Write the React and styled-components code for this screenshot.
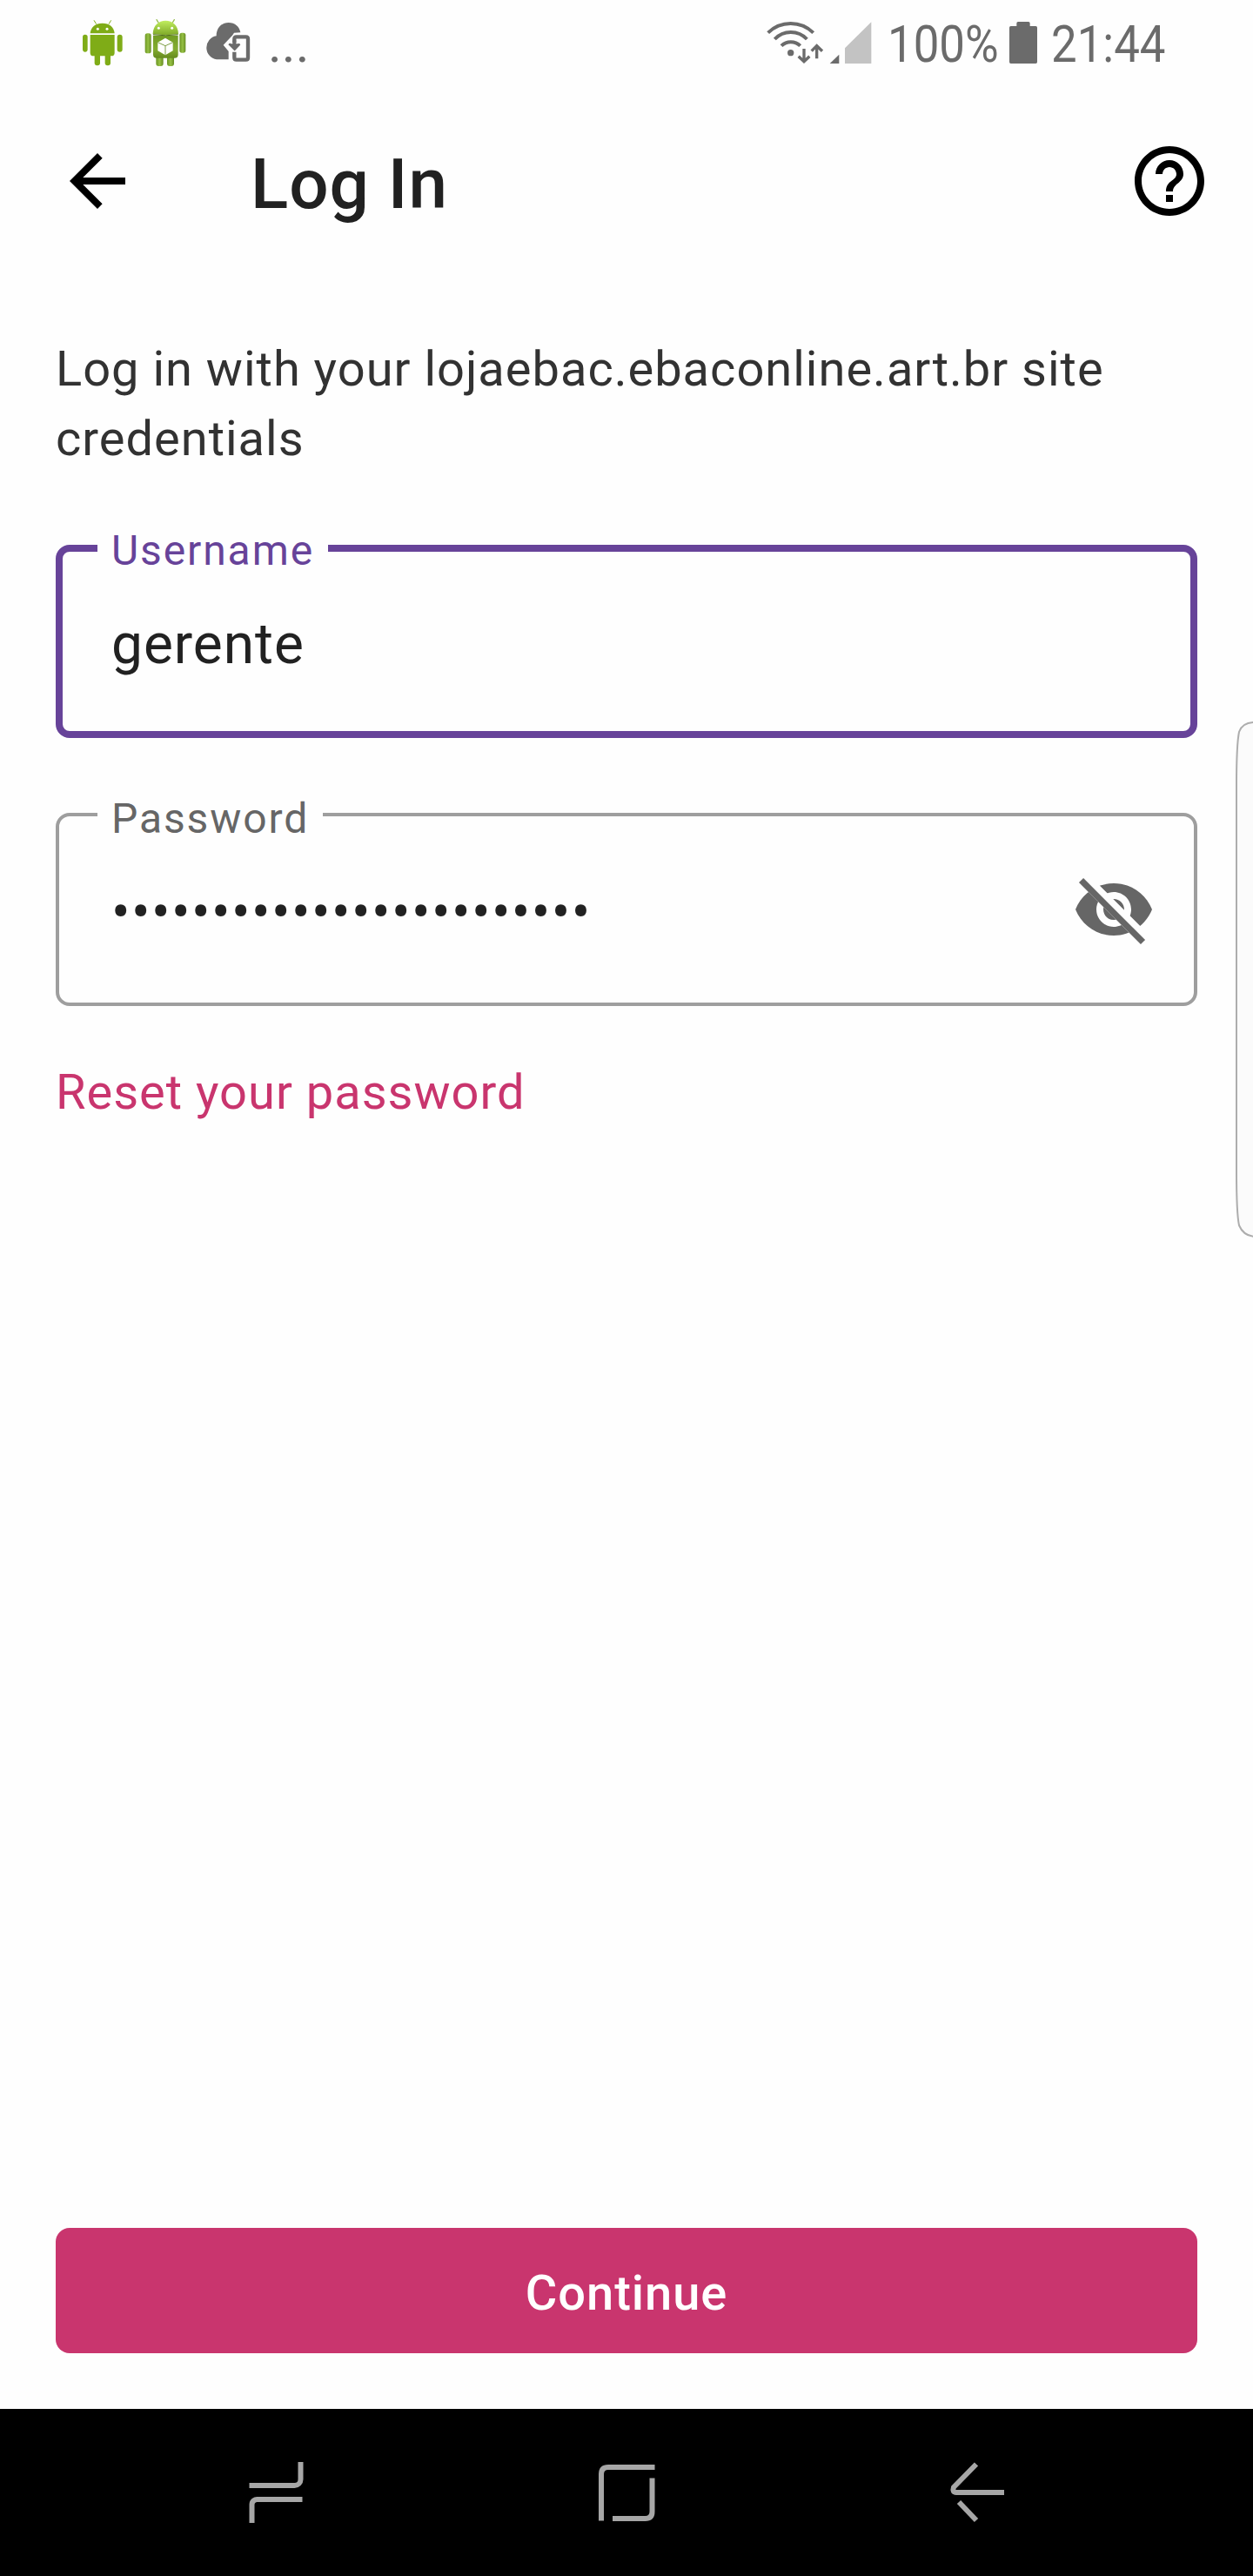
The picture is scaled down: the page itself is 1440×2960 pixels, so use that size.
import React from 'react';
import styled, { createGlobalStyle } from 'styled-components';
import { MdArrowBack, MdHelpOutline } from 'react-icons/md';

const GlobalStyle = createGlobalStyle`
  * { box-sizing: border-box; }
  body { margin: 0; background: #fefefe; }
`;

const Screen = styled.div`
  position: relative;
  width: 1440px;
  height: 2960px;
  display: flex;
  flex-direction: column;
  overflow: hidden;
  background: #fefefe;
  color: #212121;
  font-family: Roboto, 'Liberation Sans', sans-serif;
`;

const StatusBar = styled.header`
  display: flex;
  justify-content: space-between;
  height: 96px;
  padding: 0 99px 0 95px;
  color: #6b6b6b;
`;

const StatusGroup = styled.div`
  display: flex;
  align-items: flex-start;
`;

const StatusGlyph = styled.svg`
  display: block;
  flex: none;
  height: 100px;
  width: ${(p) => p.$w}px;
`;

const StatusText = styled.span`
  flex: none;
  width: ${(p) => p.$w}px;
  margin-left: ${(p) => p.$gap || 0}px;
  font-size: 60px;
  line-height: 102px;
  white-space: nowrap;
  transform: scaleX(${(p) => p.$squeeze || 1});
  transform-origin: left center;
`;

const AppBar = styled.div`
  display: flex;
  align-items: center;
  height: 224px;
  padding: 0 48px 0 64px;
  svg { display: block; width: 96px; height: 96px; color: #000; }
`;

const Title = styled.h1`
  flex: 1;
  margin: 7px 0 0 128px;
  font-size: 80px;
  font-weight: 500;
  line-height: 96px;
  letter-spacing: 1px;
`;

const Content = styled.main`
  flex: 1;
  display: flex;
  flex-direction: column;
  align-items: stretch;
  padding: 64px;
`;

const Intro = styled.p`
  margin: 0 0 58px;
  font-size: 56px;
  line-height: 80px;
  letter-spacing: 1px;
  color: #323232;
`;

const Field = styled.fieldset`
  min-width: 0;
  height: ${(p) => (p.$focused ? 246 : 248)}px;
  margin: 0 0 60px;
  padding: 0 ${(p) => (p.$focused ? 40 : 44)}px;
  border: ${(p) => (p.$focused ? '8px solid #674399' : '4px solid #9e9e9e')};
  border-radius: 16px;
`;

const Label = styled.legend`
  height: 56px;
  padding: ${(p) => (p.$focused ? 4 : 6)}px 16px 0;
  font-size: 48px;
  line-height: 53px;
  letter-spacing: 1.9px;
  color: ${(p) => (p.$focused ? '#674399' : '#666666')};
`;

const FieldRow = styled.div`
  display: flex;
  align-items: center;
  justify-content: space-between;
  height: ${(p) => p.$h}px;
  padding: 0 0 0 16px;
  svg { display: block; width: 96px; height: 96px; }
`;

const Value = styled.span`
  padding-top: ${(p) => (p.$masked ? 8 : 0)}px;
  font-size: 64px;
  line-height: 76px;
  letter-spacing: ${(p) => (p.$masked ? 1.4 : 0.95)}px;
`;

const ResetLink = styled.a`
  margin-top: -1px;
  font-size: 56px;
  line-height: 80px;
  letter-spacing: 1px;
  color: #c9356e;
`;

const Continue = styled.button`
  height: 144px;
  margin-top: auto;
  padding: 5px 0 0;
  border: 0;
  border-radius: 16px;
  background: #c9356e;
  color: #fff;
  font: 500 56px/64px Roboto, 'Liberation Sans', sans-serif;
  letter-spacing: 1px;
`;

const NavBar = styled.nav`
  display: flex;
  align-items: center;
  justify-content: center;
  gap: 303px;
  height: 192px;
  background: #000;
  svg { display: block; width: 100px; height: 100px; }
`;

const EdgeHandle = styled.svg`
  position: absolute;
  right: 0;
  top: 826px;
  width: 24px;
  height: 598px;
`;

const AndroidFlat = () => (
  <StatusGlyph $w={46} viewBox="46 0 138 300" fill="#7fac17">
    <path d="M72 115c2-22 18-35 42-35s40 13 42 35z" />
    <path d="M85 70l8 13M144 70l-8 13" stroke="#7fac17" strokeWidth="3" />
    <path d="M72 120h84v62a11 11 0 0 1-11 11H83a11 11 0 0 1-11-11z" />
    <rect x="46" y="119" width="17" height="60" rx="8.5" />
    <rect x="165" y="119" width="18" height="60" rx="9" />
    <rect x="87" y="176" width="19" height="50" rx="9" />
    <rect x="123" y="176" width="19" height="50" rx="9" />
    <circle cx="98" cy="100" r="4.5" fill="#fff" />
    <circle cx="130" cy="100" r="4.5" fill="#fff" />
  </StatusGlyph>
);

const AndroidBox = () => (
  <StatusGlyph $w={73} viewBox="184 0 219 300">
    <defs>
      <linearGradient id="head" x1="0" y1="0" x2="0" y2="1">
        <stop offset="0" stopColor="#c1ee5f" />
        <stop offset="1" stopColor="#7fa928" />
      </linearGradient>
      <linearGradient id="torso" x1="0" y1="0" x2="0" y2="1">
        <stop offset="0" stopColor="#719b22" />
        <stop offset="0.6" stopColor="#84ad31" />
        <stop offset="1" stopColor="#668b20" />
      </linearGradient>
      <linearGradient id="limb" x1="0" y1="0" x2="1" y2="0">
        <stop offset="0" stopColor="#6b9423" />
        <stop offset="0.5" stopColor="#96c144" />
        <stop offset="1" stopColor="#668b22" />
      </linearGradient>
    </defs>
    <path d="M301 68l8 13M362 68l-8 13" stroke="#98bd50" strokeWidth="4" strokeLinecap="round" />
    <rect x="299" y="184" width="25" height="44" rx="9" fill="url(#limb)" />
    <rect x="337" y="184" width="24" height="44" rx="9" fill="url(#limb)" />
    <rect x="261" y="115" width="21" height="69" rx="8" fill="url(#limb)" />
    <rect x="380" y="113" width="21" height="69" rx="8" fill="url(#limb)" />
    <path d="M289 122h86v66q0 12-12 12h-62q-12 0-12-12z" fill="url(#torso)" />
    <path d="M288 117c1-30 20-46 44-46s43 16 44 46q-44 7-88 0z" fill="url(#head)" />
    <path d="M289 119q43 7 86 0" fill="none" stroke="#4f6e17" strokeWidth="3" />
    <circle cx="308" cy="97" r="4.5" fill="#fff" />
    <circle cx="354" cy="97" r="4.5" fill="#fff" />
    <path d="M331 131l26 15v29l-26 15-26-15v-29z" fill="#fff" />
    <path d="M305 146l26 12 26-12M331 158v32" fill="none" stroke="#7f9f48" strokeWidth="3" />
  </StatusGlyph>
);

const CloudDevice = () => (
  <StatusGlyph $w={75} viewBox="403 0 225 300">
    <path d="M508 205a41 41 0 0 1-1-81c0-28 18-46 42-46 22 0 38 14 41 34l-22 1-6 9-31 33 18 22v28z" fill="#6b6b6b" />
    <path d="M569 147v-13q0-7 7-7h33q7 0 7 7v65q0 7-7 7h-33q-7 0-7-7v-20" fill="none" stroke="#6b6b6b" strokeWidth="13" />
    <path d="M549 151h14v-12h12v12h14l-20 22z" fill="#6b6b6b" />
    <path d="M551 151l19 19 17-18" fill="none" stroke="#6b6b6b" strokeWidth="8" />
  </StatusGlyph>
);

const Connectivity = () => (
  <StatusGlyph $w={122} viewBox="60 0 366 300" fill="none" stroke="#6b6b6b">
    <path d="M68 113A111 111 0 0 1 224 113" strokeWidth="12" />
    <path d="M91 135A76 76 0 0 1 202 135" strokeWidth="12" />
    <path d="M114 158A46 46 0 0 1 179 158" strokeWidth="12" />
    <circle cx="146" cy="182" r="11" fill="#6b6b6b" stroke="none" />
    <path d="M192 168v42M173 194l19 18 19-18" strokeWidth="10" />
    <path d="M236 202v-42M218 176l18-18 19 18" strokeWidth="10" />
    <path d="M281 219l32-31v31z" fill="#6b6b6b" stroke="none" />
    <path d="M333 166l91-90v143h-91z" fill="#c3c3c3" stroke="none" />
  </StatusGlyph>
);

const Battery = () => (
  <StatusGlyph $w={32} viewBox="900 0 96 300" fill="#6b6b6b">
    <path d="M930 75h36q5 0 5 5v10h20q5 0 5 5v119q0 5-5 5h-86q-5 0-5-5V95q0-5 5-5h20V80q0-5 5-5z" />
  </StatusGlyph>
);

const VisibilityOff = () => (
  <svg viewBox="0 0 24 24">
    <defs>
      <clipPath id="eyeCut">
        <path d="M2 4.27L19.73 22l2.54-2.54L4.54 1.73V1H23v22H1V4.27z" />
      </clipPath>
    </defs>
    <path
      clipPath="url(#eyeCut)"
      fill="#666"
      d="M12 4.5C7 4.5 2.73 7.61 1 12c1.73 4.39 6 7.5 11 7.5s9.27-3.11 11-7.5c-1.73-4.39-6-7.5-11-7.5zM12 17c-2.76 0-5-2.24-5-5s2.24-5 5-5 5 2.24 5 5-2.24 5-5 5zm0-8c-1.66 0-3 1.34-3 3s1.34 3 3 3 3-1.34 3-3-1.34-3-3-3z"
    />
    <path d="M3.27 4.27l16.47 16.47" stroke="#666" strokeWidth="1.8" strokeLinecap="square" />
  </svg>
);

const NavIcon = ({ paths }) => (
  <svg viewBox="0 0 100 100" fill="none" stroke="#a6a6a6" strokeWidth="6">
    {paths.map((d) => <path key={d} d={d} />)}
  </svg>
);

export default function App() {
  return (
    <Screen>
      <GlobalStyle />
      <StatusBar>
        <StatusGroup>
          <AndroidFlat />
          <AndroidBox />
          <CloudDevice />
          <StatusText $w={60} $gap={19}>...</StatusText>
        </StatusGroup>
        <StatusGroup>
          <Connectivity />
          <StatusText $w={140} $gap={18} $squeeze={0.88}>100%</StatusText>
          <Battery />
          <StatusText $w={133} $gap={16} $squeeze={0.88}>21:44</StatusText>
        </StatusGroup>
      </StatusBar>
      <AppBar>
        <MdArrowBack />
        <Title>Log In</Title>
        <MdHelpOutline />
      </AppBar>
      <Content>
        <Intro>Log in with your lojaebac.ebaconline.art.br site credentials</Intro>
        <Field $focused>
          <Label $focused>Username</Label>
          <FieldRow $h={166}><Value>gerente</Value></FieldRow>
        </Field>
        <Field>
          <Label>Password</Label>
          <FieldRow $h={162}>
            <Value $masked>{'•'.repeat(24)}</Value>
            <VisibilityOff />
          </FieldRow>
        </Field>
        <ResetLink>Reset your password</ResetLink>
        <Continue>Continue</Continue>
      </Content>
      <NavBar>
        <NavIcon paths={['M19.5 42h52a7 7 0 0 0 7-7V15', 'M22.5 85V64a6 6 0 0 1 7-6h51']} />
        <NavIcon paths={['M21 82.500V29q0-8 8-8h53.500', 'M79.500 33.500V72q0 8-8 8H34']} />
        <NavIcon paths={['M49 17.500L23 44q-2 6 3 6h55', 'M29 61L49 82']} />
      </NavBar>
      <EdgeHandle viewBox="0 0 24 598">
        <path d="M26 4Q12 4 8 15Q5 30 5 76V520Q5 568 8 582Q13 594 26 595z" fill="#fbfbfb" stroke="#adadad" strokeWidth="2" />
      </EdgeHandle>
    </Screen>
  );
}
